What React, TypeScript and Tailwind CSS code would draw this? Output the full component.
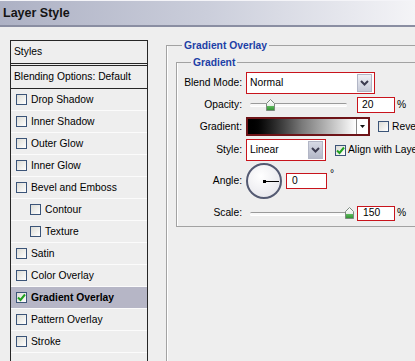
import React from 'react';

const Check = ({ checked = false }: { checked?: boolean }) => (
  <span className="flex w-[11px] h-[11px] shrink-0 items-center justify-center border border-[#3b5478] bg-gradient-to-br from-[#dcdcd6] to-white">
    {checked && (
      <svg width="9" height="9" viewBox="0 0 9 9">
        <path d="M1 4.5 L3.5 7 L8 1.5" fill="none" stroke="#21a121" strokeWidth="2" />
      </svg>
    )}
  </span>
);

const DropButton = ({ dark = false }: { dark?: boolean }) => (
  <span
    className={`flex w-[15px] h-[18px] items-center justify-center border border-[#b2b6c6] ${
      dark ? 'bg-gradient-to-b from-[#d6d9e4] to-[#b4b8c8]' : 'bg-gradient-to-b from-[#eef0f5] to-[#c6cad8]'
    }`}
  >
    <svg width="9" height="6" viewBox="0 0 9 6">
      <path d="M1 1 L4.5 4.5 L8 1" fill="none" stroke="#3c3c50" strokeWidth="2" />
    </svg>
  </span>
);

const Thumb = () => (
  <svg width="9" height="12" viewBox="0 0 9 12">
    <defs>
      <linearGradient id="thumbFill" x1="0" y1="0" x2="0" y2="1">
        <stop offset="0" stopColor="#ffffff" />
        <stop offset="0.6" stopColor="#e6ece6" />
        <stop offset="0.61" stopColor="#5cb85c" />
        <stop offset="1" stopColor="#2f8f2f" />
      </linearGradient>
    </defs>
    <path d="M0.5 4.5 L4.5 0.5 L8.5 4.5 L8.5 11.5 L0.5 11.5 Z" fill="url(#thumbFill)" stroke="#7d8a80" />
  </svg>
);

const Slider = ({ pos }: { pos: number }) => (
  <div className="relative w-[105px] h-full flex items-center">
    <div className="ml-[4px] w-[97px] h-[3px] rounded-full border-t border-[#9a9a9a] bg-[#f8f8f8] shadow-[0_1px_0_#fff]" />
    <div className="absolute top-1/2 -translate-y-1/2" style={{ left: pos }}>
      <Thumb />
    </div>
  </div>
);

const StyleRow = ({
  label,
  indent = false,
  checked = false,
  active = false,
}: {
  label: string;
  indent?: boolean;
  checked?: boolean;
  active?: boolean;
}) => (
  <div
    className={`flex h-[22px] items-center border-b border-[#fbfbfb] ${active ? 'bg-[#b6b6c6]' : ''} ${
      indent ? 'pl-[19px]' : 'pl-[5px]'
    }`}
  >
    <Check checked={checked} />
    <span className={`ml-[4px] ${active ? 'font-bold' : ''}`}>{label}</span>
  </div>
);

const Legend = ({ children, ml }: { children: React.ReactNode; ml: string }) => (
  <div className={`-mt-[7px] ${ml} w-fit px-[2px] bg-[#eeeeee] font-bold text-[#1d3fa6] leading-[13px]`}>
    {children}
  </div>
);

const Label = ({ children }: { children: React.ReactNode }) => (
  <span className="w-[65px] shrink-0 text-right">{children}</span>
);

export default function App() {
  return (
    <div className="w-[415px] h-[361px] overflow-hidden bg-[#eeeeee] text-black text-[10.3px] font-['Liberation_Sans',Arial,sans-serif]">
      {/* title bar */}
      <div className="h-[27px] flex items-center pl-[3px] border-t border-[#f4f4f8] border-b-2 border-b-[#8a8ea2] bg-gradient-to-r from-[#adb1c4] via-[#cbcedb] to-[#f4f4f7]">
        <span className="font-bold text-[12.5px] text-[#141414]">Layer Style</span>
      </div>

      <div className="flex">
        {/* styles list */}
        <div className="ml-[10px] mt-[13px] w-[138px] h-[330px] border border-[#262626]">
          <div className="flex h-[25px] items-center pl-[3px] border-b-[3px] border-double border-[#262626]">Styles</div>
          <div className="flex h-[23px] items-center pl-[3px] border-b border-[#262626]">Blending Options: Default</div>
          <StyleRow label="Drop Shadow" />
          <StyleRow label="Inner Shadow" />
          <StyleRow label="Outer Glow" />
          <StyleRow label="Inner Glow" />
          <StyleRow label="Bevel and Emboss" />
          <StyleRow label="Contour" indent />
          <StyleRow label="Texture" indent />
          <StyleRow label="Satin" />
          <StyleRow label="Color Overlay" />
          <StyleRow label="Gradient Overlay" checked active />
          <StyleRow label="Pattern Overlay" />
          <StyleRow label="Stroke" />
        </div>

        {/* settings */}
        <div className="ml-[18px] mt-[18px] flex-1 h-[330px] -mr-[20px] border-l border-t border-[#a2a2a2] shadow-[inset_1px_0_0_#fff]">
          <Legend ml="ml-[15px]">Gradient Overlay</Legend>
          <div className="ml-[9px] mt-[10px] border-l border-t border-b border-[#a2a2a2] shadow-[inset_1px_0_0_#fff] pb-[5px]">
            <Legend ml="ml-[14px]">Gradient</Legend>

            <div className="mt-[3px] flex h-[22px] items-center">
              <Label>Blend Mode:</Label>
              <div className="ml-[4px] flex w-[129px] h-[22px] items-center justify-between border border-[#c8141c] bg-white pl-[3px] pr-[2px]">
                <span>Normal</span>
                <DropButton />
              </div>
            </div>

            <div className="mt-[2px] flex h-[17px] items-center">
              <Label>Opacity:</Label>
              <div className="ml-[4px] h-full">
                <Slider pos={20} />
              </div>
              <div className="ml-[6px] w-[38px] h-[16px] flex items-center border border-[#c8141c] bg-white pl-[4px]">20</div>
              <span className="ml-[2px]">%</span>
            </div>

            <div className="mt-[4px] flex h-[19px] items-center">
              <Label>Gradient:</Label>
              <div className="ml-[4px] flex w-[124px] h-[19px] border-2 border-[#6e1418] bg-white">
                <div className="flex-1 bg-gradient-to-r from-black via-[#7a7a7a] to-white" />
                <div className="w-[12px] flex items-center justify-center border-l border-[#8a8a8a]">
                  <svg width="5" height="3" viewBox="0 0 5 3">
                    <path d="M0 0 L5 0 L2.5 3 Z" fill="#111" />
                  </svg>
                </div>
              </div>
              <span className="ml-[8px]">
                <Check />
              </span>
              <span className="ml-[3px] whitespace-nowrap">Reverse</span>
            </div>

            <div className="mt-[3px] flex h-[22px] items-center">
              <Label>Style:</Label>
              <div className="ml-[4px] flex w-[80px] h-[22px] items-center justify-between border border-[#c8141c] bg-white pl-[3px] pr-[2px]">
                <span>Linear</span>
                <DropButton dark />
              </div>
              <span className="ml-[9px]">
                <Check checked />
              </span>
              <span className="ml-[2px] whitespace-nowrap">Align with Layer</span>
            </div>

            <div className="mt-[2px] flex h-[36px] items-center">
              <Label>Angle:</Label>
              <div className="ml-[4px] relative w-[36px] h-[36px] rounded-full border-2 border-[#545a72] bg-[radial-gradient(circle_at_40%_35%,#ffffff,#e2e2e8)] flex items-center">
                <div className="ml-[15px] w-[3px] h-[3px] bg-black" />
                <div className="w-[13px] h-px bg-black" />
              </div>
              <div className="ml-[4px] w-[41px] h-[16px] flex items-center border border-[#c8141c] bg-white pl-[5px]">0</div>
              <span className="ml-[3px] self-start mt-[6px] leading-none">°</span>
            </div>

            <div className="mt-[6px] flex h-[16px] items-center">
              <Label>Scale:</Label>
              <div className="ml-[4px] h-full">
                <Slider pos={99} />
              </div>
              <div className="ml-[6px] w-[38px] h-[15px] flex items-center border border-[#c8141c] bg-white pl-[5px]">150</div>
              <span className="ml-[2px]">%</span>
            </div>
          </div>
        </div>
      </div>
    </div>
  );
}
